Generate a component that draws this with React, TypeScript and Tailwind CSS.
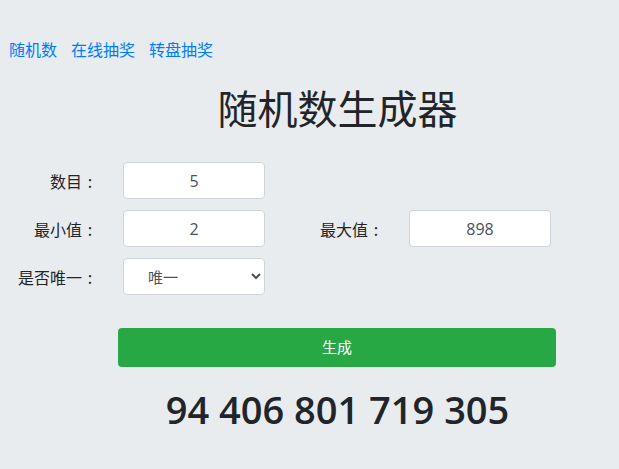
import React from "react";

const FONT = { fontFamily: '"Noto Sans CJK SC", "Noto Sans", sans-serif' };
const NUM_FONT = { fontFamily: '"Open Sans", "Noto Sans", sans-serif' };

function Field({ value }: { value: string }) {
  return (
    <input
      readOnly
      value={value}
      className="w-[142px] h-[37px] rounded-[4px] border border-[#ced4da] bg-white text-center text-[16px] text-[#495057] outline-none"
      style={NUM_FONT}
    />
  );
}

function Label({ text, className = "" }: { text: string; className?: string }) {
  return (
    <label className={className}>
      {text}
      <span className="inline-block w-[16px] text-center">:</span>
    </label>
  );
}

export default function App() {
  return (
    <div className="min-h-[469px] w-full bg-[#e9ecef] text-[#212529]" style={FONT}>
      {/* 顶部导航 */}
      <nav className="flex gap-[14px] pl-[9px] pt-[37px] text-[16px] leading-[24px] text-[#007bff]">
        <a href="#">随机数</a>
        <a href="#">在线抽奖</a>
        <a href="#">转盘抽奖</a>
      </nav>

      <h1 className="mt-[22px] pl-[56px] text-center text-[40px] leading-[48px]">随机数生成器</h1>

      <div className="mt-[31px] flex flex-col gap-[11px] text-[16px]">
        <div className="flex items-center">
          <Label text="数目" className="w-[98px] text-right" />
          <div className="ml-[25px]"><Field value="5" /></div>
        </div>
        <div className="flex items-center">
          <Label text="最小值" className="w-[98px] text-right" />
          <div className="ml-[25px]"><Field value="2" /></div>
          <Label text="最大值" className="ml-[55px] w-[64px]" />
          <div className="ml-[25px]"><Field value="898" /></div>
        </div>
        <div className="flex items-center">
          <Label text="是否唯一" className="w-[98px] text-right" />
          <div className="ml-[25px]">
            <select className="w-[142px] h-[37px] rounded-[4px] border border-[#ced4da] bg-white pl-[20px] pr-2 text-[15px] text-[#495057] outline-none">
              <option>唯一</option>
              <option>不唯一</option>
            </select>
          </div>
        </div>
      </div>

      <div className="mt-[33px] pl-[118px]">
        <button className="w-[438px] h-[39px] rounded-[4px] bg-[#28a745] text-[15px] text-white">生成</button>
      </div>

      <div className="mt-[18px] pl-[56px] text-center text-[38px] font-semibold leading-[48px]" style={NUM_FONT}>
        94 406 801 719 305
      </div>
    </div>
  );
}
